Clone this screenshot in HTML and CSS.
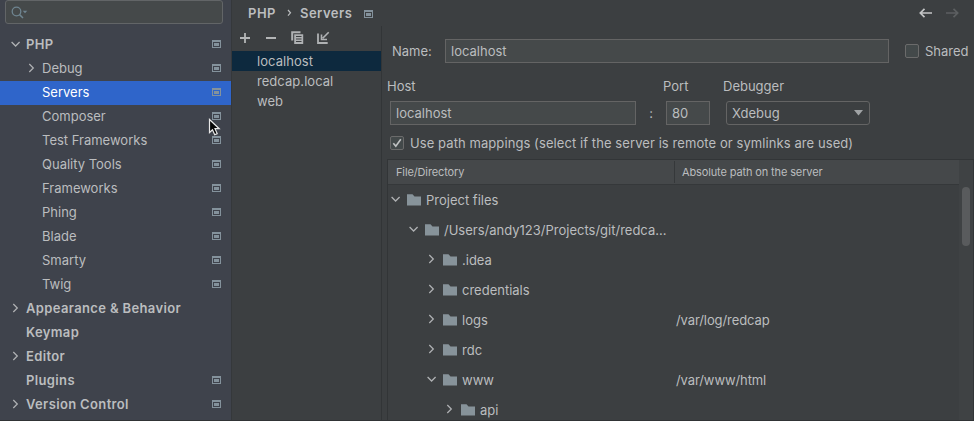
FILE: index.html
```html
<!DOCTYPE html>
<html lang="en">
<head>
<meta charset="utf-8">
<title>Settings</title>
<link rel="stylesheet" href="styles.css">
</head>
<body>
<svg class="sprite" width="0" height="0">
  <symbol id="proj" viewBox="0 0 9 8"><path fill="#84929c" fill-rule="evenodd" d="M0 0h9v8H0zM1 2v5h7V2z"/><path fill="#84929c" d="M2 3h5v3H2z"/></symbol>
  <symbol id="down" viewBox="0 0 10 10"><path fill="none" stroke="#b0b2b4" stroke-width="1.25" d="M.6 3l4 4 4-4"/></symbol>
  <symbol id="right" viewBox="0 0 10 10"><path fill="none" stroke="#b0b2b4" stroke-width="1.25" d="M2.300 1l4 4-4 4"/></symbol>
  <symbol id="folder" viewBox="0 0 14 12"><path fill="#87939a" d="M0 .3h5.500L7.500 2.500H14V11.500H0z"/></symbol>
</svg>
<div class="window">
  <aside class="sidebar">
    <div class="search">
      <svg width="18" height="14" viewBox="0 0 18 14"><circle cx="5.500" cy="5.500" r="4.300" fill="none" stroke="#6f8591" stroke-width="1.300"/><path d="M8.600 8.600l3.400 3.400" stroke="#6f8591" stroke-width="1.500"/><path d="M11.700 4.700h4.600L14 7.200z" fill="#6f8591"/></svg>
    </div>
    <nav class="nav">
      <div class="item top"><svg class="chev"><use href="#down"/></svg><span>PHP</span><svg class="proj"><use href="#proj"/></svg></div>
      <div class="item sub"><svg class="chev"><use href="#right"/></svg><span>Debug</span><svg class="proj"><use href="#proj"/></svg></div>
      <div class="item sub selected"><i class="chev"></i><span>Servers</span><svg class="proj"><use href="#proj"/></svg></div>
      <div class="item sub"><i class="chev"></i><span>Composer</span><svg class="proj"><use href="#proj"/></svg></div>
      <div class="item sub"><i class="chev"></i><span>Test Frameworks</span><svg class="proj"><use href="#proj"/></svg></div>
      <div class="item sub"><i class="chev"></i><span>Quality Tools</span><svg class="proj"><use href="#proj"/></svg></div>
      <div class="item sub"><i class="chev"></i><span>Frameworks</span><svg class="proj"><use href="#proj"/></svg></div>
      <div class="item sub"><i class="chev"></i><span>Phing</span><svg class="proj"><use href="#proj"/></svg></div>
      <div class="item sub"><i class="chev"></i><span>Blade</span><svg class="proj"><use href="#proj"/></svg></div>
      <div class="item sub"><i class="chev"></i><span>Smarty</span><svg class="proj"><use href="#proj"/></svg></div>
      <div class="item sub"><i class="chev"></i><span>Twig</span><svg class="proj"><use href="#proj"/></svg></div>
      <div class="item top"><svg class="chev"><use href="#right"/></svg><span>Appearance &amp; Behavior</span></div>
      <div class="item top"><i class="chev"></i><span>Keymap</span></div>
      <div class="item top"><svg class="chev"><use href="#right"/></svg><span>Editor</span></div>
      <div class="item top"><i class="chev"></i><span>Plugins</span><svg class="proj"><use href="#proj"/></svg></div>
      <div class="item top"><svg class="chev"><use href="#right"/></svg><span>Version Control</span><svg class="proj"><use href="#proj"/></svg></div>
    </nav>
    <svg class="cursor" width="14" height="20" viewBox="0 0 14 20"><path d="M1.500 1.500v13l3-2.800 2.200 5 2.500-1.100-2.200-4.900h4.200z" fill="#050505" stroke="#e8e8e8" stroke-width="1.200"/></svg>
  </aside>
  <main class="main">
    <header class="header">
      <span>PHP</span>
      <svg class="crumb" width="5" height="8" viewBox="0 0 5 8"><path d="M1 1l2.500 2.800L1 6.600" fill="none" stroke="#bbbdbf" stroke-width="1.200"/></svg>
      <span>Servers</span>
      <svg class="proj"><use href="#proj"/></svg>
      <svg class="arrows" width="40" height="10" viewBox="0 0 40 10"><g fill="none" stroke-width="1.700"><path stroke="#c3c5c6" d="M13 5H1.500M5.500.8L1.300 5l4.200 4.200"/><path stroke="#5c5f61" d="M27 5h11.500M34.500.8L38.700 5l-4.200 4.200"/></g></svg>
    </header>
    <div class="columns">
      <section class="servers">
        <div class="toolbar">
          <svg width="90" height="16" viewBox="0 0 90 16">
            <path d="M0 8h10M5 3v10M26 8h10" stroke="#b3b5b6" stroke-width="1.800" fill="none"/>
            <path d="M51.200 10.500V1.200h9.300V3.200H53.200v7.300z" fill="#afb1b3"/>
            <path fill-rule="evenodd" d="M54.200 4.200H63.200V14H54.200zM56 6v1h5.500V6zM56 8.500v1h5.500v-1zM56 11v1h5.500v-1z" fill="#afb1b3"/>
            <path d="M78 3.500v9.500h9.700" stroke="#afb1b3" stroke-width="1.800" fill="none"/>
            <path d="M88.700 2.300l-6 6M81.500 4.500v5H87" stroke="#afb1b3" stroke-width="1.600" fill="none"/>
          </svg>
        </div>
        <div class="server active">localhost</div>
        <div class="server">redcap.local</div>
        <div class="server">web</div>
      </section>
      <section class="form">
        <div class="name-row">
          <label class="name-label">Name:</label>
          <div class="field name-field">localhost</div>
          <i class="check"></i>
          <label>Shared</label>
        </div>
        <div class="labels"><label>Host</label><label>Port</label><label>Debugger</label></div>
        <div class="host-row">
          <div class="field host-field">localhost</div>
          <span class="colon">:</span>
          <div class="field port-field">80</div>
          <div class="combo"><span>Xdebug</span><svg width="9" height="6" viewBox="0 0 9 6"><path d="M0 0h9L4.500 5.500z" fill="#a0a3a5"/></svg></div>
        </div>
        <div class="mapping-row">
          <i class="check"><svg width="12" height="12" viewBox="0 0 12 12"><path d="M2.300 6.200l2.500 2.900L9.800 2.200" fill="none" stroke="#c0c2c3" stroke-width="1.600"/></svg></i>
          <label>Use path mappings (select if the server is remote or symlinks are used)</label>
        </div>
        <div class="table">
          <div class="body">
            <div class="thead"><span>File/Directory</span><span>Absolute path on the server</span></div>
            <div class="row l0"><div><svg class="chev"><use href="#down"/></svg><svg class="folder"><use href="#folder"/></svg><span>Project files</span></div></div>
            <div class="row l1"><div><svg class="chev"><use href="#down"/></svg><svg class="folder"><use href="#folder"/></svg><span>/Users/andy123/Projects/git/redca...</span></div></div>
            <div class="row l2"><div><svg class="chev"><use href="#right"/></svg><svg class="folder"><use href="#folder"/></svg><span>.idea</span></div></div>
            <div class="row l2"><div><svg class="chev"><use href="#right"/></svg><svg class="folder"><use href="#folder"/></svg><span>credentials</span></div></div>
            <div class="row l2"><div><svg class="chev"><use href="#right"/></svg><svg class="folder"><use href="#folder"/></svg><span>logs</span></div><span class="path">/var/log/redcap</span></div>
            <div class="row l2"><div><svg class="chev"><use href="#right"/></svg><svg class="folder"><use href="#folder"/></svg><span>rdc</span></div></div>
            <div class="row l2"><div><svg class="chev"><use href="#down"/></svg><svg class="folder"><use href="#folder"/></svg><span>www</span></div><span class="path">/var/www/html</span></div>
            <div class="row l3"><div><svg class="chev"><use href="#right"/></svg><svg class="folder"><use href="#folder"/></svg><span>api</span></div></div>
          </div>
          <div class="scroll"><i></i></div>
        </div>
      </section>
    </div>
  </main>
</div>
</body>
</html>
```
FILE: styles.css
```css
* { box-sizing: border-box; }
body { margin: 0; overflow: hidden; background: #3c3f41; color: #bbbdbf; font: 13px/20px Inter, "Liberation Sans", sans-serif; white-space: nowrap; }
.sprite { position: absolute; }
svg { display: block; flex: none; }
.window { display: flex; width: 974px; height: 421px; overflow: hidden; border-bottom: 1px solid #303335; }
.sidebar { position: relative; flex: none; width: 232px; background: #3f434c; border-right: 1px solid #35383b; }
.search { width: 218px; height: 24px; margin: 0 0 9px 5px; padding: 5px 0 0 5px; background: #45494a; border: 1px solid #626567; border-radius: 3px; }
.item { display: flex; align-items: center; height: 24px; padding-right: 10px; padding-bottom: 2px; }
.item.top { padding-left: 11px; font-weight: 600; letter-spacing: .36px; }
.item.sub { padding-left: 27px; }
.item.selected { background: #2f65ca; color: #fff; }
.chev { flex: none; width: 10px; height: 10px; margin-right: 5px; }
.proj { width: 9px; height: 8px; }
.item .proj { margin-left: auto; }
.cursor { position: absolute; left: 208px; top: 118px; }
.main { flex: 1; min-width: 0; display: flex; flex-direction: column; }
.header { display: flex; align-items: center; height: 26px; padding: 0 15px 1px 16px; font-weight: 600; letter-spacing: .5px; }
.crumb { margin: 0 8px 0 11px; }
.header .proj { margin-left: 12px; margin-top: 2px; }
.arrows { margin-left: auto; }
.columns { flex: 1; min-height: 0; display: flex; }
.servers { flex: none; width: 150px; border-right: 1px solid #323537; }
.toolbar { height: 25px; padding: 4px 0 0 8px; }
.server { height: 20px; padding: 0 0 0 25px; letter-spacing: .05px; }
.server.active { background: #0d293e; }
.form { flex: 1; min-width: 0; display: flex; flex-direction: column; }
.name-row { display: flex; align-items: center; margin-top: 13px; padding-left: 10px; height: 24px; }
.name-label { width: 53px; }
.field { height: 24px; padding: 1px 0 0 5px; background: #45494a; border: 1px solid #646464; }
.name-field { width: 444px; margin-right: 16px; }
.check { flex: none; width: 14px; height: 14px; margin-right: 6px; border: 1px solid #6b6b6b; border-radius: 2px; background: #43494a; }
.labels { display: grid; grid-template-columns: 276px 60px 1fr; padding-left: 5px; margin-top: 13px; height: 25px; }
.host-row { display: flex; align-items: center; padding-left: 8px; height: 24px; }
.host-field { width: 246px; }
.colon { width: 30px; text-align: center; }
.port-field { width: 44px; margin-right: 16px; }
.combo { display: flex; align-items: center; justify-content: space-between; width: 144px; height: 24px; padding: 0 6px 0 5px; border: 1px solid #646464; border-radius: 3px; }
.mapping-row { display: flex; align-items: center; padding: 2px 0 0 8px; height: 34px; letter-spacing: .08px; }
.table { flex: 1; min-height: 0; display: flex; margin-left: 5px; border: 1px solid #323537; border-bottom: 0; }
.body { flex: 1; min-width: 0; }
.thead { display: grid; grid-template-columns: 286px 1fr; align-items: center; height: 25px; background: #45484a; border-bottom: 1px solid #35383a; font-size: 11px; line-height: 22px; letter-spacing: -.13px; }
.thead span { height: 22px; padding-left: 8px; }
.thead span + span { padding-left: 7px; border-left: 1px solid #35383a; }
.row { display: grid; align-items: center; height: 30px; }
.row div { display: flex; align-items: center; min-width: 0; }
.row .chev { margin: -2px 6px 0 0; }
.path { letter-spacing: -.1px; margin-left: -1px; }
.l0 { padding-left: 3px; grid-template-columns: 286px 1fr; }
.l1 { padding-left: 21px; grid-template-columns: 268px 1fr; }
.l2 { padding-left: 39px; grid-template-columns: 250px 1fr; }
.l3 { padding-left: 57px; grid-template-columns: 232px 1fr; }
.folder { width: 14px; height: 12px; margin-right: 5px; }
.scroll { width: 14px; padding: 27px 0 0 3px; background: #3f4244; }
.scroll i { display: block; width: 8px; height: 59px; border-radius: 4px; background: #595b5d; }
```
